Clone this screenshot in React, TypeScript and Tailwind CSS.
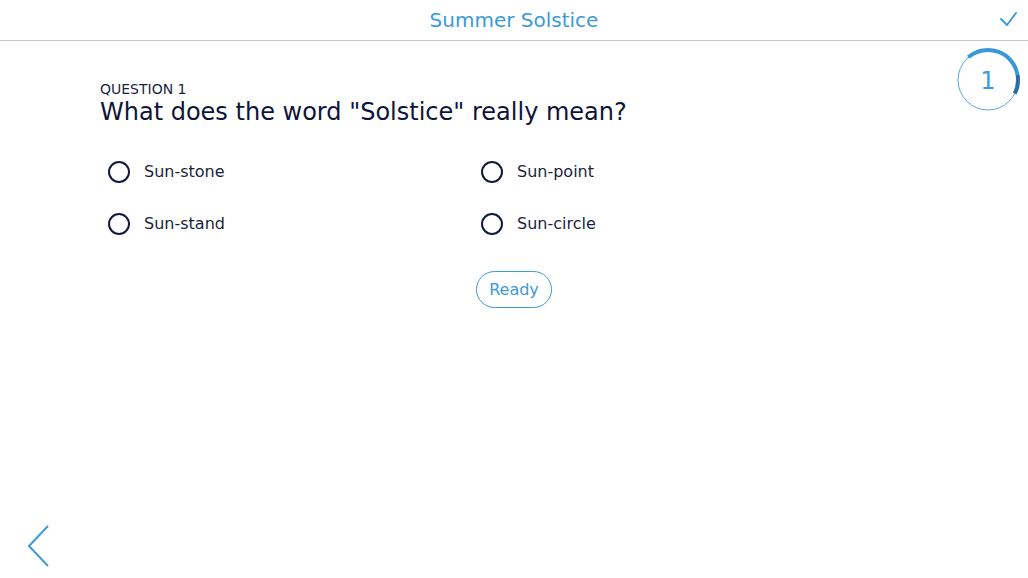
import React from "react";

const options = [
  ["Sun-stone", "Sun-point"],
  ["Sun-stand", "Sun-circle"],
];

function Radio({ label }: { label: string }) {
  return (
    <label className="flex items-center gap-[14px] h-[24px]">
      <span className="block w-[22px] h-[22px] rounded-full border-2 border-[#141a3e]" />
      <span className="text-[16px] text-[#1a1f3d]">{label}</span>
    </label>
  );
}

export default function App() {
  return (
    <div
      className="relative w-[1028px] h-[578px] bg-white overflow-hidden"
      style={{ fontFamily: '"DejaVu Sans", Verdana, sans-serif' }}
    >
      <header className="relative h-[41px] border-b border-[#c6c6c6] flex items-center justify-center">
        <h1 className="text-[20px] text-[#3d9ad8] leading-none pb-[1px]">Summer Solstice</h1>
        <svg className="absolute left-[996px] top-[9px]" width="24" height="22" viewBox="0 0 24 22">
          <path d="M5 10 L11 16 L20 4" fill="none" stroke="#3d9ad8" strokeWidth="2" strokeLinecap="round" strokeLinejoin="round" />
        </svg>
      </header>

      <svg className="absolute left-[953px] top-[45px]" width="70" height="70" viewBox="0 0 70 70">
        <circle cx="35" cy="35" r="30" fill="none" stroke="#5aa8de" strokeWidth="1" />
        <path d="M15.32 12.35 A30 30 0 0 1 64.54 29.79" fill="none" stroke="#3a97d8" strokeWidth="4" />
        <path d="M64.54 29.79 A30 30 0 0 1 61.73 48.62" fill="none" stroke="#2a6ea8" strokeWidth="4" />
        <text x="35" y="44" textAnchor="middle" fontSize="24" fill="#3d9ad8" style={{ fontFamily: '"DejaVu Sans", sans-serif' }}>1</text>
      </svg>

      <main className="pt-[40px]">
        <div className="pl-[100px]">
          <div className="text-[14px] leading-[17px] text-[#1a1f3d]">QUESTION 1</div>
          <div className="text-[24px] leading-[29px] text-[#0f1538]">What does the word "Solstice" really mean?</div>

          <div className="pl-[8px] pt-[33px] grid grid-cols-[373px_200px] gap-y-[28px]">
            {options.flat().map((o) => (
              <Radio key={o} label={o} />
            ))}
          </div>
        </div>

        <div className="flex justify-center mt-[35px]">
          <button className="h-[37px] px-[12px] rounded-full border border-[#3d9ad8] text-[16px] text-[#3d9ad8] bg-white">
            Ready
          </button>
        </div>
      </main>

      <svg className="absolute left-[24px] top-[522px]" width="30" height="50" viewBox="0 0 30 50">
        <path d="M24 4 L5 24 L24 44" fill="none" stroke="#3d9ad8" strokeWidth="2" />
      </svg>
    </div>
  );
}
